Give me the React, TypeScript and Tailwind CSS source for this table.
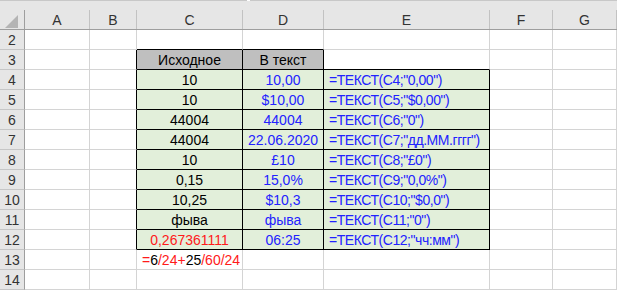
import React from "react";

type Cell = {
  text?: React.ReactNode;
  align?: "center" | "left";
  color?: "black" | "blue" | "red";
};

const COLS = ["A", "B", "C", "D", "E", "F", "G"];
const WIDTHS = ["w-[65px]", "w-[47px]", "w-[106px]", "w-[81px]", "w-[166px]", "w-[63px]", "w-[64px]"];

const data: Record<number, Record<string, Cell>> = {
  3: { C: { text: "Исходное" }, D: { text: "В текст" } },
  4: { C: { text: "10" }, D: { text: "10,00", color: "blue" }, E: { text: '=ТЕКСТ(C4;"0,00")', align: "left", color: "blue" } },
  5: { C: { text: "10" }, D: { text: "$10,00", color: "blue" }, E: { text: '=ТЕКСТ(C5;"$0,00")', align: "left", color: "blue" } },
  6: { C: { text: "44004" }, D: { text: "44004", color: "blue" }, E: { text: '=ТЕКСТ(C6;"0")', align: "left", color: "blue" } },
  7: { C: { text: "44004" }, D: { text: "22.06.2020", color: "blue" }, E: { text: '=ТЕКСТ(C7;"дд.ММ.гггг")', align: "left", color: "blue" } },
  8: { C: { text: "10" }, D: { text: "£10", color: "blue" }, E: { text: '=ТЕКСТ(C8;"£0")', align: "left", color: "blue" } },
  9: { C: { text: "0,15" }, D: { text: "15,0%", color: "blue" }, E: { text: '=ТЕКСТ(C9;"0,0%")', align: "left", color: "blue" } },
  10: { C: { text: "10,25" }, D: { text: "$10,3", color: "blue" }, E: { text: '=ТЕКСТ(C10;"$0,0")', align: "left", color: "blue" } },
  11: { C: { text: "фыва" }, D: { text: "фыва", color: "blue" }, E: { text: '=ТЕКСТ(C11;"0")', align: "left", color: "blue" } },
  12: { C: { text: "0,267361111", color: "red" }, D: { text: "06:25", color: "blue" }, E: { text: '=ТЕКСТ(C12;"чч:мм")', align: "left", color: "blue" } },
  13: {
    C: {
      align: "left",
      color: "red",
      text: (
        <>
          =<span className="text-black">6</span>/24+<span className="text-black">25</span>/60/24
        </>
      ),
    },
  },
};

const ROWS = [2, 3, 4, 5, 6, 7, 8, 9, 10, 11, 12, 13, 14];

function inTable(r: number) {
  return r >= 3 && r <= 12;
}

function SheetCell({ row, col, idx }: { row: number; col: string; idx: number }) {
  const cell = data[row]?.[col];
  const rightBlack =
    (inTable(row) && (col === "B" || col === "C" || col === "D")) || (row >= 4 && row <= 12 && col === "E");
  const bottomBlack = (inTable(row) && (col === "C" || col === "D" || col === "E")) || (row === 2 && (col === "C" || col === "D"));
  const fill =
    row === 3 && (col === "C" || col === "D")
      ? "bg-[#bfbfbf]"
      : row >= 4 && row <= 12 && (col === "C" || col === "D" || col === "E")
        ? "bg-[#e2efda]"
        : "bg-white";
  const color = cell?.color === "blue" ? "text-[#2222ff]" : cell?.color === "red" ? "text-[#ff1a1a]" : "text-black";
  return (
    <div
      className={`${WIDTHS[idx]} h-5 shrink-0 border-r border-b flex items-center overflow-visible whitespace-nowrap ${fill} ${color} ${
        rightBlack ? "border-r-black" : "border-r-[#d4d4d4]"
      } ${bottomBlack ? "border-b-black" : "border-b-[#d4d4d4]"} ${
        cell?.align === "left" ? "justify-start pl-[5px]" : "justify-center"
      } ${col === "E" ? "tracking-[-0.45px]" : ""}`}
    >
      {cell?.text}
    </div>
  );
}

export default function App() {
  return (
    <div className="w-[617px] h-[291px] overflow-hidden bg-white font-['Liberation_Sans',Arial,sans-serif] text-[14px] leading-none">
      {/* remnant of the formula bar */}
      <div className="flex h-px">
        <div className="w-[247px] bg-[#c8c8c8]" />
        <div className="w-[3px] bg-white" />
        <div className="flex-1 bg-[#c8c8c8]" />
      </div>

      {/* column headers */}
      <div className="bg-[#e6e6e6]">
        <div className="h-[9px]" />
        <div className="flex h-5 border-b border-[#9e9e9e] text-[#333]">
          <div className="w-[25px] shrink-0 border-r border-[#9e9e9e] flex items-center justify-center">
            <svg width="13" height="13" viewBox="0 0 13 13" className="mt-[3px] -ml-[2px]">
              <polygon points="13,0 13,13 0,13" fill="#b4b4b4" />
            </svg>
          </div>
          {COLS.map((c, i) => (
            <div
              key={c}
              className={`${WIDTHS[i]} shrink-0 border-r border-[#c2c2c2] flex items-center justify-center pt-px`}
            >
              {c}
            </div>
          ))}
        </div>
      </div>

      {/* rows */}
      {ROWS.map((r) => (
        <div key={r} className="flex">
          <div className="w-[25px] h-5 shrink-0 bg-[#e6e6e6] border-r border-b border-r-[#9e9e9e] border-b-[#c6c6c6] flex items-center justify-center text-[#333]">
            {r}
          </div>
          {COLS.map((c, i) => (
            <SheetCell key={c} row={r} col={c} idx={i} />
          ))}
        </div>
      ))}
    </div>
  );
}
